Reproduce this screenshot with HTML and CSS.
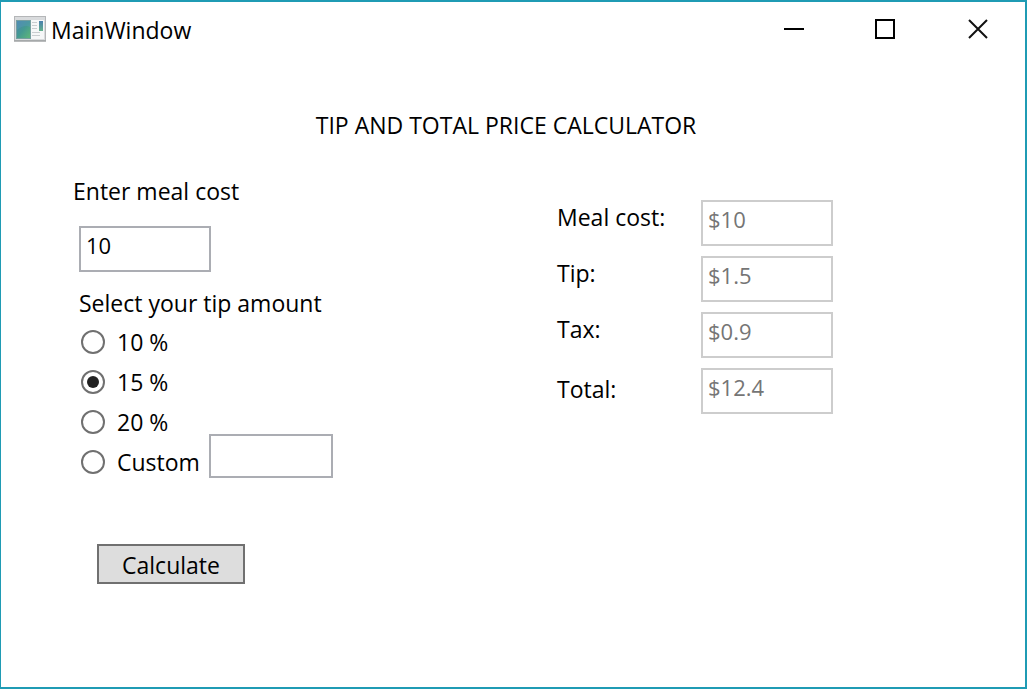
FILE: index.html
```html
<!DOCTYPE html>
<html lang="en">
<head>
<meta charset="utf-8">
<title>MainWindow</title>
<link rel="stylesheet" href="styles.css">
</head>
<body>
<div class="window">
  <header class="titlebar">
    <svg class="app-icon" width="32" height="26" viewBox="0 0 32 26" aria-hidden="true">
      <defs>
        <linearGradient id="pane" x1="0" y1="0" x2="1" y2="1">
          <stop offset="0" stop-color="#4a82b0"/>
          <stop offset="0.5" stop-color="#449a91"/>
          <stop offset="1" stop-color="#5fb878"/>
        </linearGradient>
        <linearGradient id="chip" x1="0" y1="0" x2="0" y2="1">
          <stop offset="0" stop-color="#4a7fae"/>
          <stop offset="1" stop-color="#63b18c"/>
        </linearGradient>
      </defs>
      <rect x="0.5" y="0.5" width="31" height="24" fill="#d9dbdd" stroke="#b4b6b8"/>
      <path d="M0 25H32" stroke="#a2a4a6" stroke-width="1.500"/>
      <rect x="2" y="4" width="28" height="19" fill="#f6f7f8"/>
      <rect x="2.500" y="4.500" width="14" height="18" fill="url(#pane)" stroke="#769fa0"/>
      <path d="M3 14Q10 8 16 11V5H3Z" fill="#5a98bc" opacity="0.4"/>
      <path d="M18 6.500H23M18 9.500H23M18 12.500H23M18 16.500H26M18 19.500H26" stroke="#c9cdd0"/>
      <rect x="25" y="5" width="4" height="10" fill="url(#chip)"/>
    </svg>
    <span class="title">MainWindow</span>
    <div class="controls">
      <button class="control" type="button" aria-label="Minimize">
        <svg width="22" height="22" viewBox="0 0 22 22"><path d="M0 11H20" stroke="#000" stroke-width="2"/></svg>
      </button>
      <button class="control" type="button" aria-label="Maximize">
        <svg width="22" height="22" viewBox="0 0 22 22"><rect x="0" y="2" width="18" height="18" fill="none" stroke="#000" stroke-width="2" overflow="visible"/></svg>
      </button>
      <button class="control" type="button" aria-label="Close">
        <svg width="22" height="22" viewBox="0 0 22 22"><path d="M1 2L19 20M19 2L1 20" stroke="#111" stroke-width="2"/></svg>
      </button>
    </div>
  </header>
  <main>
    <h1 class="heading">TIP AND TOTAL PRICE CALCULATOR</h1>
    <div class="columns">
      <form class="entry">
        <label for="meal">Enter meal cost</label>
        <input class="box meal" id="meal" type="text" value="10">
        <fieldset class="tips">
          <legend>Select your tip amount</legend>
          <div class="options">
            <label class="option"><input type="radio" name="tip">10 %</label>
            <label class="option"><input type="radio" name="tip" checked>15 %</label>
            <label class="option"><input type="radio" name="tip">20 %</label>
          </div>
          <div class="custom">
            <label class="option"><input type="radio" name="tip">Custom</label>
            <input class="box custom-box" type="text" aria-label="Custom tip">
          </div>
        </fieldset>
        <button class="calculate" type="button">Calculate</button>
      </form>
      <section class="results">
        <div class="result"><label for="cost">Meal cost:</label><input class="box" id="cost" type="text" value="$10" disabled></div>
        <div class="result"><label for="tip">Tip:</label><input class="box" id="tip" type="text" value="$1.5" disabled></div>
        <div class="result"><label for="tax">Tax:</label><input class="box" id="tax" type="text" value="$0.9" disabled></div>
        <div class="result total"><label for="total">Total:</label><input class="box" id="total" type="text" value="$12.4" disabled></div>
      </section>
    </div>
  </main>
</div>
</body>
</html>
```
FILE: styles.css
```css
* {
  box-sizing: border-box;
}

body {
  margin: 0;
  background: #fff;
  color: #000;
  font: 23px/32px "Open Sans", "Noto Sans", sans-serif;
}

input,
button {
  font: inherit;
  color: inherit;
  margin: 0;
}

.window {
  min-height: 100vh;
  border: 2px solid #1f9bb4;
  border-left-width: 1px;
}

.titlebar {
  display: flex;
  align-items: center;
  height: 54px;
  padding-left: 13px;
}

.title {
  margin-left: 5px;
  padding-top: 2px;
}

.controls {
  display: flex;
  align-self: stretch;
  margin-left: auto;
}

.control {
  display: flex;
  align-items: center;
  justify-content: center;
  width: 92px;
  padding: 0;
  border: 0;
  background: none;
}

.control svg {
  overflow: visible;
}

.heading {
  margin: 53px 14px 0 0;
  font-size: 23px;
  font-weight: 400;
  text-align: center;
}

.columns {
  display: grid;
  grid-template-columns: 1fr 1fr;
  padding-left: 72px;
}

.entry {
  display: flex;
  flex-direction: column;
  align-items: flex-start;
  padding-top: 34px;
}

.box {
  width: 132px;
  height: 46px;
  padding: 0 5px 8px;
  border: 2px solid #abadb3;
  border-radius: 0;
  background: #fff;
  font-size: 22px;
}

.box:disabled {
  border-color: #cdcdcd;
  color: #757575;
}

.meal {
  margin: 19px 0 15px 6px;
}

.tips {
  margin: 0 0 0 6px;
  padding: 0;
  border: 0;
}

.tips legend {
  padding: 0;
}

.options {
  display: flex;
  flex-direction: column;
  gap: 16px;
  padding-top: 11px;
}

.option {
  display: flex;
  align-items: center;
  gap: 12px;
  padding-left: 2px;
  line-height: 24px;
}

.option input {
  display: grid;
  place-items: center;
  appearance: none;
  width: 24px;
  height: 24px;
  border: 2px solid #707070;
  border-radius: 50%;
}

.option input:checked::before {
  content: "";
  width: 12px;
  height: 12px;
  border-radius: 50%;
  background: #212121;
}

.custom {
  display: flex;
  align-items: flex-end;
}

.custom .option {
  width: 130px;
  padding-bottom: 4px;
}

.custom-box {
  width: 124px;
  height: 44px;
}

.calculate {
  width: 148px;
  height: 40px;
  margin: 66px 0 0 24px;
  padding: 2px 0 0;
  border: 2px solid #707070;
  border-radius: 0;
  background: #ddd;
  line-height: 32px;
}

.results {
  display: flex;
  flex-direction: column;
  gap: 10px;
  padding: 59px 0 0 8px;
}

.result {
  display: grid;
  grid-template-columns: 144px 132px;
  align-items: start;
}

.result label {
  padding-top: 1px;
}

.total label {
  padding-top: 5px;
}
```
